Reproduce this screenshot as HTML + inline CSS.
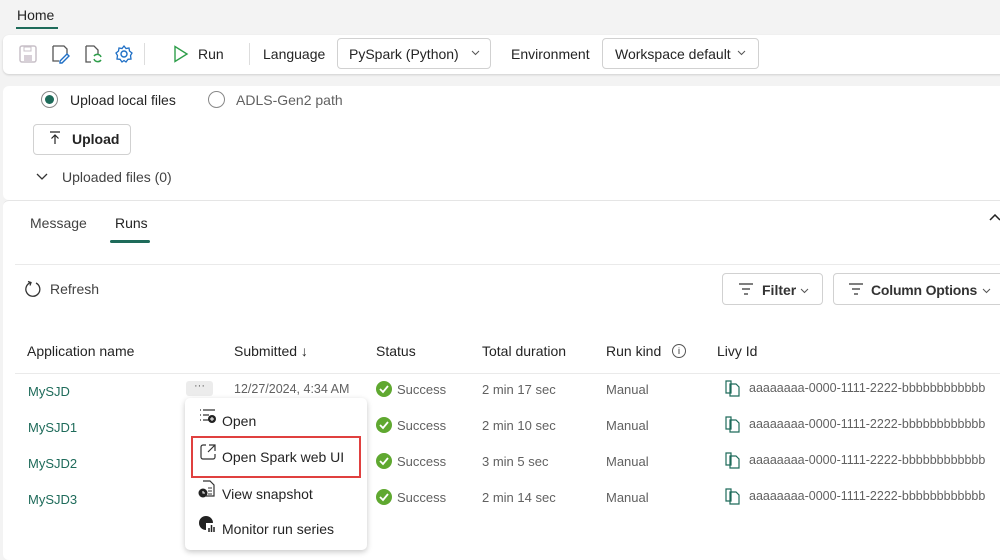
<!DOCTYPE html>
<html><head><meta charset="utf-8"><style>
*{box-sizing:border-box;margin:0;padding:0}
body{width:1000px;height:551px;overflow:hidden;background:#f3f3f3;font-family:"Liberation Sans",sans-serif;color:#242424;font-size:14px;position:relative}
.a{position:absolute;white-space:nowrap}
.card{position:absolute;background:#fff;border-radius:6px}
.btn{position:absolute;border:1px solid #d1d1d1;border-radius:4px;background:#fff}
.g{color:#616161}
.lnk{color:#1e6b5a}
.s{font-size:13px;color:#616161}
.id{font-size:12.5px;color:#616161}
</style></head><body>
<div class="a" style="left:17px;top:7px;font-size:14px">Home</div>
<div class="a" style="left:16px;top:27px;width:42px;height:2px;background:#1e6b5a"></div>

<div class="card" style="left:3px;top:35px;width:1010px;height:39px;box-shadow:0 1px 2px rgba(0,0,0,.15)"></div>
<svg class="a" style="left:18px;top:44px" width="20" height="20" viewBox="0 0 20 20"><rect x="2" y="2" width="16" height="16" rx="2" fill="none" stroke="#c8c0c8" stroke-width="1.5"/><rect x="6" y="11" width="8" height="6" fill="#d8d0d8"/><rect x="6" y="3" width="7" height="4" fill="none" stroke="#c8c0c8"/></svg>
<svg class="a" style="left:50px;top:44px" width="20" height="20" viewBox="0 0 20 20"><path d="M3 2h11l3 3v6M3 2v15h6" fill="none" stroke="#555" stroke-width="1.3"/><path d="M10 17l7-7 2 2-7 7h-2z" fill="none" stroke="#1f6fc5" stroke-width="1.4"/></svg>
<svg class="a" style="left:83px;top:44px" width="20" height="20" viewBox="0 0 20 20"><path d="M3 2h8l4 4v4M3 2v16h5" fill="none" stroke="#555" stroke-width="1.3"/><path d="M11 12a4 4 0 0 1 7 1M18 16a4 4 0 0 1-7-1" fill="none" stroke="#2e9e4a" stroke-width="1.5"/></svg>
<svg class="a" style="left:114px;top:44px" width="20" height="20" viewBox="0 0 20 20"><circle cx="10" cy="10" r="3" fill="none" stroke="#1f6fc5" stroke-width="1.4"/><path d="M10 2l2 2.5 3-.5.5 3L18 9l-1.5 2.5L17 15l-3 .3L12 18l-2-1.5L8 18l-2-2.7-3-.3.5-3.5L2 9l2.5-2 .5-3 3 .5z" fill="none" stroke="#1f6fc5" stroke-width="1.3"/></svg>
<div class="a" style="left:144px;top:43px;width:1px;height:22px;background:#ddd"></div>
<svg class="a" style="left:173px;top:45px" width="16" height="18" viewBox="0 0 16 18"><path d="M2 1.5v15l12-7.5z" fill="none" stroke="#2e9e4a" stroke-width="1.4"/></svg>
<div class="a" style="left:198px;top:46px">Run</div>
<div class="a" style="left:249px;top:43px;width:1px;height:22px;background:#ddd"></div>
<div class="a" style="left:263px;top:46px">Language</div>
<div class="btn" style="left:337px;top:38px;width:154px;height:31px"></div>
<div class="a" style="left:349px;top:46px">PySpark (Python)</div>
<svg class="a" style="left:471px;top:50px" width="9" height="6"><path d="M1 1l3.5 3.5L8 1" fill="none" stroke="#555" stroke-width="1"/></svg>
<div class="a" style="left:511px;top:46px">Environment</div>
<div class="btn" style="left:602px;top:38px;width:157px;height:31px"></div>
<div class="a" style="left:615px;top:46px">Workspace default</div>
<svg class="a" style="left:737px;top:50px" width="9" height="6"><path d="M1 1l3.5 3.5L8 1" fill="none" stroke="#555" stroke-width="1"/></svg>

<div class="card" style="left:3px;top:86px;width:1010px;height:114px"></div>
<div class="a" style="left:41px;top:91px;width:17px;height:17px;border:1px solid #888;border-radius:50%"></div>
<div class="a" style="left:45px;top:95px;width:9px;height:9px;background:#1e6b5a;border-radius:50%"></div>
<div class="a" style="left:70px;top:92px">Upload local files</div>
<div class="a" style="left:208px;top:91px;width:17px;height:17px;border:1px solid #888;border-radius:50%"></div>
<div class="a g" style="left:236px;top:92px">ADLS-Gen2 path</div>
<div class="btn" style="left:33px;top:124px;width:98px;height:31px"></div>
<svg class="a" style="left:49px;top:131px" width="12" height="14"><path d="M1 1h10M6 13V4M2.5 7.5L6 4l3.5 3.5" fill="none" stroke="#242424" stroke-width="1.2"/></svg>
<div class="a" style="left:72px;top:131px;font-weight:bold">Upload</div>
<svg class="a" style="left:36px;top:172px" width="12" height="10"><path d="M1 2l5 5 5-5" fill="none" stroke="#333" stroke-width="1.3"/></svg>
<div class="a" style="left:62px;top:169px;color:#424242">Uploaded files (0)</div>

<div class="card" style="left:3px;top:200px;width:1010px;height:360px;border-top:1px solid #e5e5e5"></div>
<svg class="a" style="left:989px;top:214px" width="12" height="8"><path d="M1 6l5-5 5 5" fill="none" stroke="#222" stroke-width="1.5"/></svg>
<div class="a g" style="left:30px;top:215px;color:#424242">Message</div>
<div class="a" style="left:115px;top:215px">Runs</div>
<div class="a" style="left:110px;top:240px;width:40px;height:3px;background:#1e6b5a;border-radius:2px"></div>
<div class="a" style="left:15px;top:264px;width:990px;height:1px;background:#eaeaea"></div>
<svg class="a" style="left:24px;top:280px" width="18" height="18" viewBox="0 0 18 18"><path d="M7 2.5A7 7 0 1 0 12 3" fill="none" stroke="#333" stroke-width="1.3"/><path d="M4 1.5l3 1-1 3" fill="none" stroke="#333" stroke-width="1.3"/></svg>
<div class="a" style="left:50px;top:281px;color:#424242">Refresh</div>
<div class="btn" style="left:722px;top:273px;width:101px;height:32px"></div>
<svg class="a" style="left:738px;top:283px" width="16" height="12"><path d="M1 1h14M4 6h8M6 11h4" stroke="#333" stroke-width="1.3"/></svg>
<div class="a" style="left:762px;top:282px;font-weight:bold;color:#333">Filter</div>
<svg class="a" style="left:800px;top:288px" width="9" height="6"><path d="M1 1l3.5 3.5L8 1" fill="none" stroke="#555" stroke-width="1"/></svg>
<div class="btn" style="left:833px;top:273px;width:180px;height:32px"></div>
<svg class="a" style="left:848px;top:283px" width="16" height="12"><path d="M1 1h14M4 6h8M6 11h4" stroke="#333" stroke-width="1.3"/></svg>
<div class="a" style="left:871px;top:282px;font-weight:bold;color:#333;letter-spacing:-0.2px">Column Options</div>
<svg class="a" style="left:982px;top:288px" width="9" height="6"><path d="M1 1l3.5 3.5L8 1" fill="none" stroke="#555" stroke-width="1"/></svg>

<div class="a" style="left:27px;top:343px">Application name</div>
<div class="a" style="left:234px;top:343px">Submitted &#8595;</div>
<div class="a" style="left:376px;top:343px">Status</div>
<div class="a" style="left:482px;top:343px">Total duration</div>
<div class="a" style="left:606px;top:343px">Run kind</div>
<div class="a" style="left:672px;top:344px;width:14px;height:14px;border:1px solid #555;border-radius:50%;font-size:9px;text-align:center;line-height:12px">i</div>
<div class="a" style="left:717px;top:343px">Livy Id</div>
<div class="a" style="left:15px;top:373px;width:990px;height:1px;background:#eaeaea"></div>

<div class="a lnk" style="left:28px;top:384px;font-size:13px">MySJD</div>
<div class="a lnk" style="left:28px;top:420px;font-size:13px">MySJD1</div>
<div class="a lnk" style="left:28px;top:456px;font-size:13px">MySJD2</div>
<div class="a lnk" style="left:28px;top:492px;font-size:13px">MySJD3</div>
<div class="a" style="left:186px;top:381px;width:27px;height:15px;background:#ececec;border-radius:3px;font-size:11px;text-align:center;line-height:10px;color:#555">···</div>
<div class="a s" style="left:234px;top:382px;font-size:12.5px">12/27/2024, 4:34 AM</div>

<svg class="a" style="left:376px;top:381px" width="16" height="16"><circle cx="8" cy="8" r="8" fill="#5fa830"/><path d="M4 8l3 3 5-6" fill="none" stroke="#fff" stroke-width="1.8"/></svg>
<svg class="a" style="left:376px;top:417px" width="16" height="16"><circle cx="8" cy="8" r="8" fill="#5fa830"/><path d="M4 8l3 3 5-6" fill="none" stroke="#fff" stroke-width="1.8"/></svg>
<svg class="a" style="left:376px;top:453px" width="16" height="16"><circle cx="8" cy="8" r="8" fill="#5fa830"/><path d="M4 8l3 3 5-6" fill="none" stroke="#fff" stroke-width="1.8"/></svg>
<svg class="a" style="left:376px;top:489px" width="16" height="16"><circle cx="8" cy="8" r="8" fill="#5fa830"/><path d="M4 8l3 3 5-6" fill="none" stroke="#fff" stroke-width="1.8"/></svg>
<div class="a s" style="left:397px;top:382px">Success</div>
<div class="a s" style="left:397px;top:418px">Success</div>
<div class="a s" style="left:397px;top:454px">Success</div>
<div class="a s" style="left:397px;top:490px">Success</div>
<div class="a s" style="left:482px;top:382px">2 min 17 sec</div>
<div class="a s" style="left:482px;top:418px">2 min 10 sec</div>
<div class="a s" style="left:482px;top:454px">3 min 5 sec</div>
<div class="a s" style="left:482px;top:490px">2 min 14 sec</div>
<div class="a s" style="left:606px;top:382px">Manual</div>
<div class="a s" style="left:606px;top:418px">Manual</div>
<div class="a s" style="left:606px;top:454px">Manual</div>
<div class="a s" style="left:606px;top:490px">Manual</div>
<svg class="a" style="left:725px;top:379px" width="16" height="18" viewBox="0 0 16 18"><path d="M1 2h5v12H1zM5 5h6l3 3v9H5z" fill="#fff" stroke="#1e6b5a" stroke-width="1.2"/></svg>
<svg class="a" style="left:725px;top:415px" width="16" height="18" viewBox="0 0 16 18"><path d="M1 2h5v12H1zM5 5h6l3 3v9H5z" fill="#fff" stroke="#1e6b5a" stroke-width="1.2"/></svg>
<svg class="a" style="left:725px;top:451px" width="16" height="18" viewBox="0 0 16 18"><path d="M1 2h5v12H1zM5 5h6l3 3v9H5z" fill="#fff" stroke="#1e6b5a" stroke-width="1.2"/></svg>
<svg class="a" style="left:725px;top:487px" width="16" height="18" viewBox="0 0 16 18"><path d="M1 2h5v12H1zM5 5h6l3 3v9H5z" fill="#fff" stroke="#1e6b5a" stroke-width="1.2"/></svg>
<div class="a id" style="left:749px;top:381px">aaaaaaaa-0000-1111-2222-bbbbbbbbbbbb</div>
<div class="a id" style="left:749px;top:417px">aaaaaaaa-0000-1111-2222-bbbbbbbbbbbb</div>
<div class="a id" style="left:749px;top:453px">aaaaaaaa-0000-1111-2222-bbbbbbbbbbbb</div>
<div class="a id" style="left:749px;top:489px">aaaaaaaa-0000-1111-2222-bbbbbbbbbbbb</div>

<div class="a" style="left:185px;top:398px;width:182px;height:152px;background:#fff;border-radius:5px;box-shadow:0 2px 6px rgba(0,0,0,.22)"></div>
<svg class="a" style="left:199px;top:409px" width="18" height="16" viewBox="0 0 18 16"><path d="M1 1h1M4 1h12M1 6h1M4 6h6M1 11h1M4 11h6" stroke="#333" stroke-width="1.3"/><circle cx="13" cy="10" r="4" fill="#222"/><path d="M13 8v4M11 10h4" stroke="#fff" stroke-width="1"/></svg>
<div class="a" style="left:222px;top:413px">Open</div>
<div class="a" style="left:191px;top:436px;width:170px;height:42px;border:2px solid #e0403f"></div>
<svg class="a" style="left:200px;top:444px" width="16" height="16" viewBox="0 0 16 16"><path d="M6 1H3a2 2 0 0 0-2 2v10a2 2 0 0 0 2 2h10a2 2 0 0 0 2-2v-3M9 1h6v6M15 1L8 8" fill="none" stroke="#333" stroke-width="1.2"/></svg>
<div class="a" style="left:222px;top:449px">Open Spark web UI</div>
<svg class="a" style="left:198px;top:480px" width="18" height="19" viewBox="0 0 18 19"><path d="M5 1h7l4 4v11H8" fill="none" stroke="#333" stroke-width="1.2"/><path d="M10 8h4M10 11h4M10 14h4" stroke="#333"/><circle cx="5" cy="13" r="4.5" fill="#222"/><path d="M5 11v2h2" stroke="#fff" stroke-width="1" fill="none"/></svg>
<div class="a" style="left:222px;top:486px">View snapshot</div>
<svg class="a" style="left:198px;top:515px" width="18" height="18" viewBox="0 0 18 18"><path d="M8 1a7 7 0 1 0 0 14h0V8H15A7 7 0 0 0 8 1z" fill="#222"/><path d="M11 17v-4M13.5 17v-7M16 17v-5" stroke="#222" stroke-width="1.5"/></svg>
<div class="a" style="left:222px;top:521px">Monitor run series</div>
</body></html>
